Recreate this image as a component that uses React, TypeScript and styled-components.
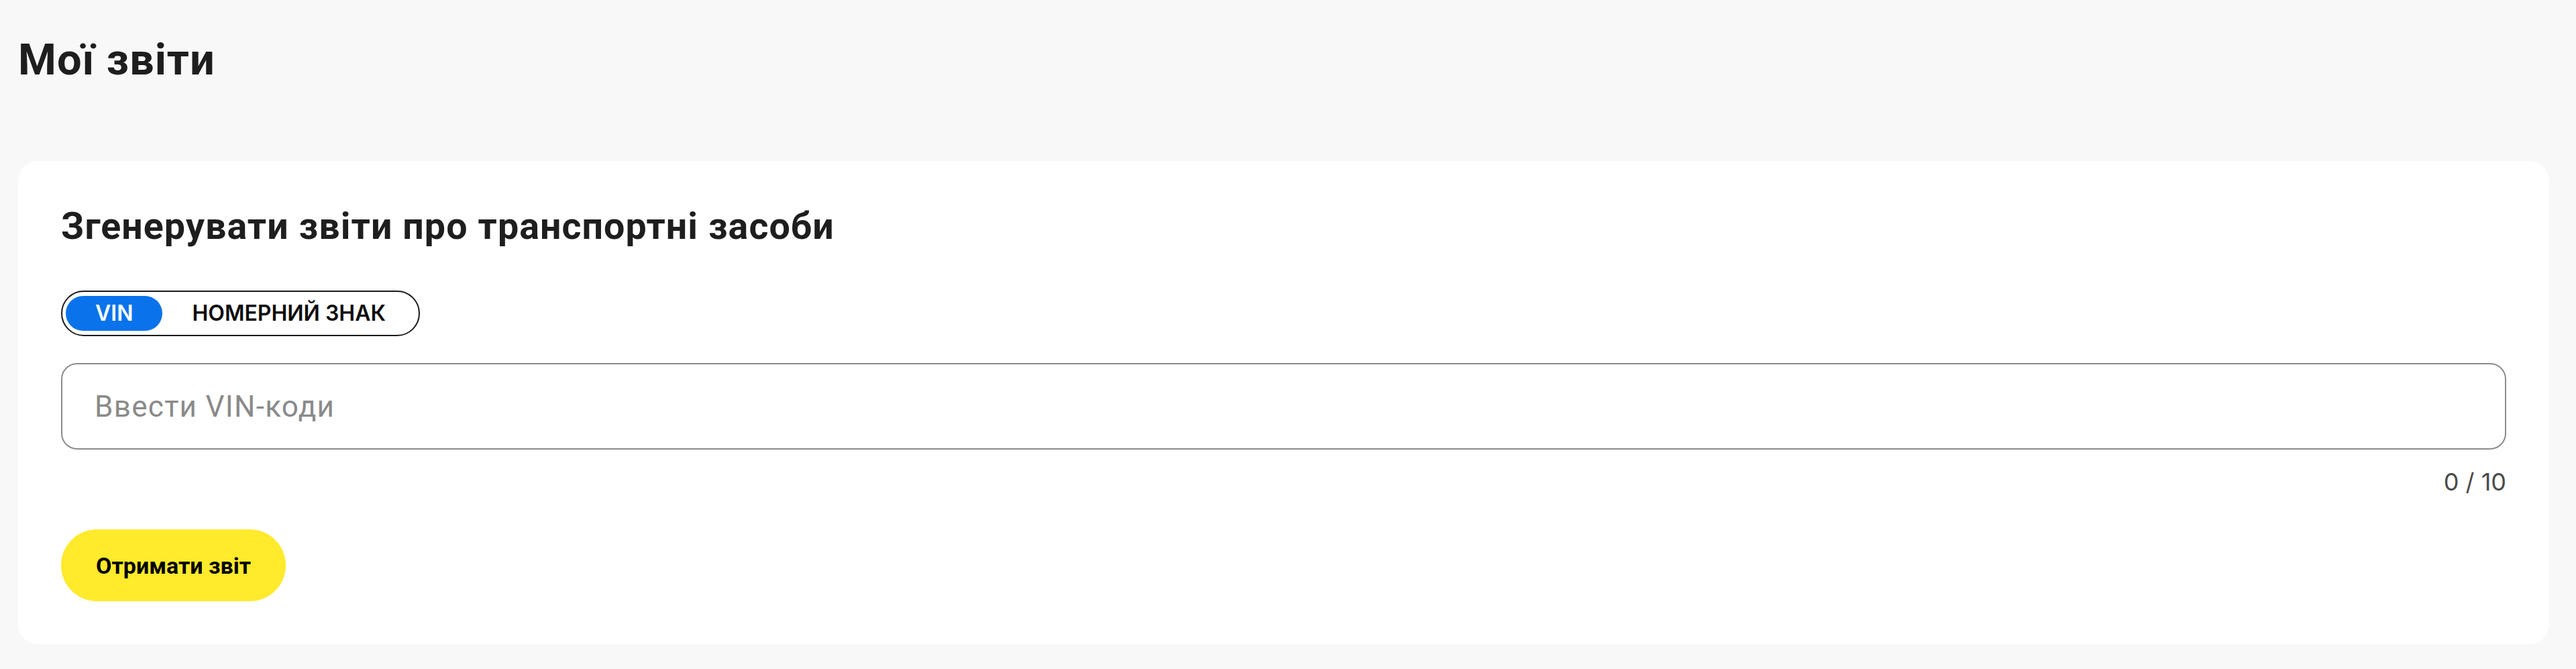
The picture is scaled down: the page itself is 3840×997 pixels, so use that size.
import React, { useState } from "react";
import styled, { createGlobalStyle } from "styled-components";

const GlobalStyle = createGlobalStyle`
  html, body {
    margin: 0;
    padding: 0;
    background: #f8f8f8;
  }
  * { box-sizing: border-box; }
`;

const Page = styled.main`
  padding: 0 40px 0 27px;
  font-family: Roboto, "Liberation Sans", sans-serif;
  color: #1e1e1e;
`;

const Title = styled.h1`
  margin: 51px 0 0 0;
  font-size: 65px;
  line-height: 76px;
  font-weight: 700;
  letter-spacing: 1px;
  color: #1e1e1e;
`;

const Card = styled.section`
  margin-top: 113px;
  background: #ffffff;
  border-radius: 30px;
  padding: 66px 64px 64px 64px;
  display: flex;
  flex-direction: column;
  align-items: flex-start;
`;

const CardTitle = styled.h2`
  margin: 0;
  font-size: 55.5px;
  line-height: 64px;
  font-weight: 700;
  letter-spacing: 1.1px;
  color: #1e1e1e;
`;

const Toggle = styled.div`
  margin-top: 63px;
  display: inline-flex;
  align-items: center;
  border: 2px solid #1a1a1a;
  border-radius: 999px;
  padding: 6px 5px;
`;

const ToggleOption = styled.button<{ $active?: boolean }>`
  height: 52px;
  padding: 0 44px;
  border: none;
  border-radius: 26px;
  background: ${(p) => (p.$active ? "#0a73eb" : "transparent")};
  color: ${(p) => (p.$active ? "#ffffff" : "#0d0d0d")};
  font-family: Inter, "Noto Sans", sans-serif;
  font-weight: 600;
  font-size: 32px;
  line-height: 52px;
  cursor: pointer;
`;

const Field = styled.div`
  margin-top: 40px;
  width: 100%;
  display: flex;
  flex-direction: column;
  align-items: flex-end;
`;

const Input = styled.input`
  width: 100%;
  height: 129px;
  border: 2px solid #8c8c8c;
  border-radius: 24px;
  padding: 0 48px;
  font-family: Roboto, "Liberation Sans", sans-serif;
  font-size: 44px;
  letter-spacing: 1.3px;
  color: #1e1e1e;
  background: #fff;
  outline: none;
  &::placeholder {
    color: #8a8a8a;
  }
`;

const Counter = styled.div`
  margin-top: 26px;
  font-family: Inter, "Noto Sans", sans-serif;
  font-size: 36px;
  line-height: 44px;
  color: #4a4a4a;
`;

const SubmitButton = styled.button`
  margin-top: 49px;
  height: 107px;
  padding: 0 52px;
  border: none;
  border-radius: 54px;
  background: #ffea2b;
  color: #000;
  font-family: Roboto, "Liberation Sans", sans-serif;
  font-weight: 700;
  font-size: 34px;
  cursor: pointer;
`;

export default function App() {
  const [mode, setMode] = useState<"vin" | "plate">("vin");
  const [value, setValue] = useState("");
  const count = value.split(/[\s,]+/).filter(Boolean).length;
  return (
    <>
      <GlobalStyle />
      <Page>
        <Title>Мої звіти</Title>
        <Card>
          <CardTitle>Згенерувати звіти про транспортні засоби</CardTitle>
          <Toggle>
            <ToggleOption $active={mode === "vin"} onClick={() => setMode("vin")}>
              VIN
            </ToggleOption>
            <ToggleOption $active={mode === "plate"} onClick={() => setMode("plate")}>
              НОМЕРНИЙ ЗНАК
            </ToggleOption>
          </Toggle>
          <Field>
            <Input
              placeholder={mode === "vin" ? "Ввести VIN-коди" : "Ввести номерні знаки"}
              value={value}
              onChange={(e) => setValue(e.target.value)}
            />
            <Counter>{count} / 10</Counter>
          </Field>
          <SubmitButton>Отримати звіт</SubmitButton>
        </Card>
      </Page>
    </>
  );
}
